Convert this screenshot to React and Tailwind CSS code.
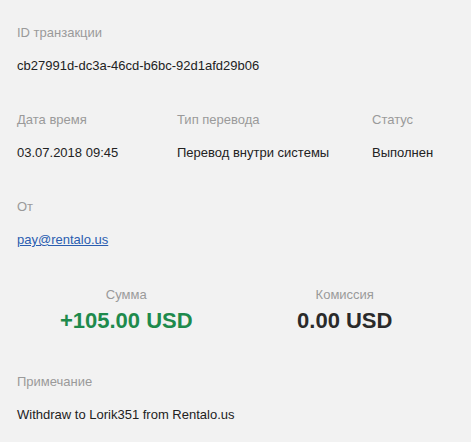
import React from 'react'

function Label({ children, className = '' }) {
  return <div className={`text-[13px] leading-5 text-[#9a9a9a] ${className}`}>{children}</div>
}

function Value({ children, className = '' }) {
  return <div className={`mt-[13px] text-[13px] leading-5 text-[#222] ${className}`}>{children}</div>
}

export default function App() {
  return (
    <div
      className="w-[471px] h-[442px] bg-[#f2f2f2] px-[17px] pt-[23px] overflow-hidden"
      style={{ fontFamily: '"Liberation Sans", Arial, sans-serif' }}
    >
      <div>
        <Label>ID транзакции</Label>
        <Value>cb27991d-dc3a-46cd-b6bc-92d1afd29b06</Value>
      </div>

      <div className="mt-[34px] flex">
        <div className="w-[160px]">
          <Label>Дата время</Label>
          <Value>03.07.2018 09:45</Value>
        </div>
        <div className="w-[195px]">
          <Label>Тип перевода</Label>
          <Value>Перевод внутри системы</Value>
        </div>
        <div className="flex-1">
          <Label>Статус</Label>
          <Value>Выполнен</Value>
        </div>
      </div>

      <div className="mt-[34px]">
        <Label>От</Label>
        <Value>
          <a href="#" className="text-[#2a5db0] underline">pay@rentalo.us</a>
        </Value>
      </div>

      <div className="mt-[35px] grid grid-cols-2 text-center">
        <div>
          <Label>Сумма</Label>
          <div className="mt-[2px] text-[22px] leading-7 font-bold text-[#1e8a4c]">+105.00 USD</div>
        </div>
        <div>
          <Label>Комиссия</Label>
          <div className="mt-[2px] text-[22px] leading-7 font-bold text-[#2a2a2a]">0.00 USD</div>
        </div>
      </div>

      <div className="mt-[37px]">
        <Label>Примечание</Label>
        <Value>Withdraw to Lorik351 from Rentalo.us</Value>
      </div>
    </div>
  )
}
